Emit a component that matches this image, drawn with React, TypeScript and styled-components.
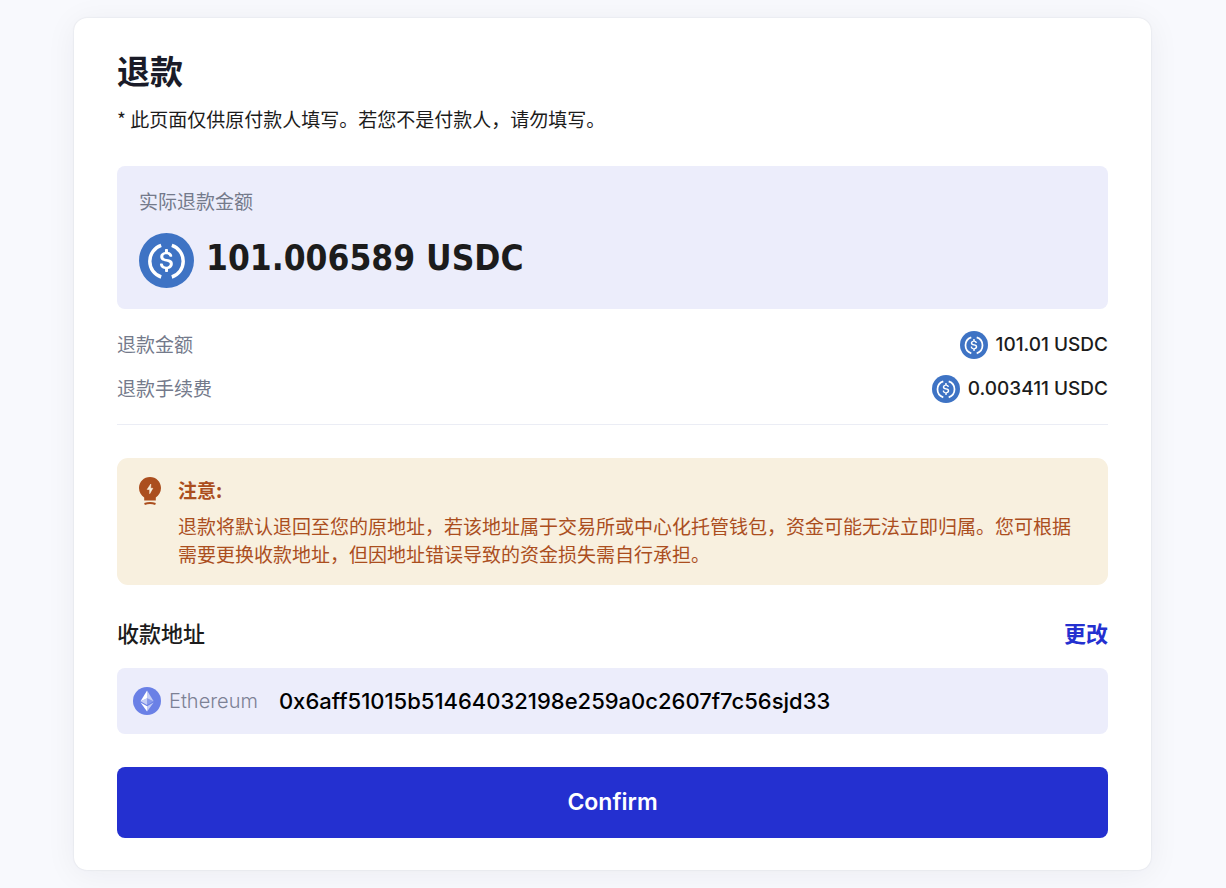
import React from 'react';
import styled, { createGlobalStyle } from 'styled-components';

const latin = `Inter, "Noto Sans CJK SC", sans-serif`;
const chinese = `"Noto Sans CJK SC", sans-serif`;

const GlobalStyle = createGlobalStyle`
  *, *::before, *::after { box-sizing: border-box; }
  body {
    margin: 0;
    background: #f8f9fd;
    color: #1c1c1c;
    font-family: ${chinese};
    font-size: 19px;
    line-height: 28px;
  }
  h1, h2, h3, p, dl, dd { margin: 0; }
  svg { display: block; flex: none; }
`;

const Page = styled.div`
  padding: 18px 75px 18px 74px;
`;

const Card = styled.main`
  padding: 30px 43px 32px;
  background: #fff;
  border-radius: 13px;
  box-shadow: 0 0 2px rgba(28, 30, 50, 0.12), 0 4px 32px rgba(28, 30, 50, 0.06);
`;

const Title = styled.h1`
  font-size: 33px;
  line-height: 44px;
  font-weight: 700;
  color: #1a1b28;
`;

const Hint = styled.p`
  margin-top: 13px;
`;

const Panel = styled.section`
  background: #ecedfb;
  border-radius: 8px;
`;

const TotalPanel = styled(Panel)`
  margin-top: 33px;
  padding: 21px 22px;
`;

const Label = styled.p`
  color: #747a8b;
`;

const Total = styled.p`
  display: flex;
  align-items: flex-start;
  gap: 12px;
  margin-top: 18px;
  font-family: "DejaVu Sans Condensed", "DejaVu Sans", sans-serif;
  font-size: 35px;
  line-height: 50px;
  font-weight: 700;
`;

const Breakdown = styled.dl`
  display: grid;
  gap: 16px;
  margin-top: 22px;
  padding-bottom: 21px;
  border-bottom: 1px solid #ebedf5;
`;

const BreakdownRow = styled.div`
  display: flex;
  justify-content: space-between;
  align-items: flex-start;

  dt {
    color: #747a8b;
    line-height: 26px;
  }
  dd {
    display: flex;
    align-items: center;
    gap: 8px;
    font-family: ${latin};
    font-weight: 500;
  }
`;

const Notice = styled.aside`
  display: flex;
  align-items: flex-start;
  gap: 17px;
  margin-top: 33px;
  padding: 19px 22px 17px;
  border-radius: 11px;
  background: #f8f0df;
  color: #ab4e1e;
`;

const NoticeTitle = styled.h2`
  margin-bottom: 9px;
  font-size: 19px;
  line-height: 26px;
  font-weight: 700;
`;

const SectionHead = styled.header`
  display: flex;
  justify-content: space-between;
  align-items: center;
  margin-top: 33px;
`;

const SectionTitle = styled.h2`
  font-size: 22px;
  line-height: 28px;
  font-weight: 500;
`;

const TextButton = styled.button`
  padding: 0;
  border: 0;
  background: none;
  color: #2430d0;
  font-family: ${chinese};
  font-size: 22px;
  line-height: 28px;
  font-weight: 700;
  cursor: pointer;
`;

const AddressPanel = styled(Panel)`
  display: flex;
  align-items: center;
  margin-top: 22px;
  padding: 19px 16px;
  font-family: ${latin};
`;

const Network = styled.span`
  margin: 0 21px 0 8px;
  color: #7c8195;
  font-size: 20px;
  font-weight: 300;
`;

const Address = styled.span`
  color: #000;
  font-size: 22px;
  font-weight: 500;
`;

const ConfirmButton = styled.button`
  width: 100%;
  margin-top: 33px;
  padding: 21px;
  border: 0;
  border-radius: 8px;
  background: #2430d0;
  color: #fff;
  font-family: ${latin};
  font-size: 23px;
  line-height: 29px;
  font-weight: 600;
  cursor: pointer;
`;

const UsdcIcon = ({ size }: { size: number }) => (
  <svg width={size} height={size} viewBox="0 0 32 32" aria-hidden="true">
    <circle cx="16" cy="16" r="16" fill="#3e73c4" />
    <path
      fill="#fff"
      transform="translate(1.28 1.31) scale(.92)"
      d="M20.022 18.124c0-2.124-1.28-2.852-3.84-3.156-1.828-.243-2.193-.728-2.193-1.578 0-.85.61-1.396 1.828-1.396 1.097 0 1.707.364 2.011 1.275a.458.458 0 00.427.303h.975a.416.416 0 00.427-.425v-.06a3.04 3.04 0 00-2.743-2.489V9.142c0-.243-.183-.425-.487-.486h-.915c-.243 0-.426.182-.487.486v1.396c-1.829.242-2.986 1.456-2.986 2.974 0 2.002 1.218 2.791 3.778 3.095 1.707.303 2.255.668 2.255 1.639 0 .97-.853 1.638-2.011 1.638-1.585 0-2.133-.667-2.316-1.578-.06-.242-.244-.364-.427-.364h-1.036a.416.416 0 00-.426.425v.06c.243 1.518 1.219 2.61 3.23 2.914v1.457c0 .242.183.425.487.485h.915c.243 0 .426-.182.487-.485V21.34c1.829-.303 3.047-1.578 3.047-3.217z"
    />
    <path
      fill="none"
      stroke="#fff"
      strokeWidth="2"
      d="M12.9 7.2A9.7 9.7 0 0 0 12.9 25.6M19.1 7.2A9.7 9.7 0 0 1 19.1 25.6"
    />
  </svg>
);

const EthereumIcon = () => (
  <svg width="28" height="28" viewBox="0 0 32 32" aria-hidden="true">
    <circle cx="16" cy="16" r="16" fill="#6a80e6" />
    <g fill="#fff" transform="translate(-.4 0)">
      <path fillOpacity=".602" d="M16.498 4v8.87l7.497 3.350z" />
      <path d="M16.498 4L9 16.220l7.498-3.350z" />
      <path fillOpacity=".602" d="M16.498 21.968v6.027L24 17.616z" />
      <path d="M16.498 27.995v-6.028L9 17.616z" />
      <path fillOpacity=".2" d="M16.498 20.573l7.497-4.353-7.497-3.348z" />
      <path fillOpacity=".602" d="M9 16.220l7.498 4.353v-7.701z" />
    </g>
  </svg>
);

const BulbIcon = () => (
  <svg width="22" height="28" viewBox="0 0 22 28" aria-hidden="true">
    <path
      fill="currentColor"
      d="M11 0C4.900 0 0 4.900 0 11c0 4.200 2.300 7.300 5.200 9.500V23.500h11.600v-3C19.700 18.300 22 15.200 22 11 22 4.900 17.100 0 11 0z"
    />
    <path fill="none" stroke="currentColor" strokeWidth="2" d="M5.500 27Q11 25 16.500 27" />
    <path
      fill="#f8f0df"
      stroke="#f8f0df"
      strokeWidth=".6"
      strokeLinejoin="round"
      d="M11.800 7L8.200 12.400h2.500v4.300l3.100-5.400h-2.200z"
    />
  </svg>
);

const amounts = [
  { label: '退款金额', value: '101.01 USDC' },
  { label: '退款手续费', value: '0.003411 USDC' },
];

export default function App() {
  return (
    <>
      <GlobalStyle />
      <Page>
        <Card>
          <Title>退款</Title>
          <Hint>* 此页面仅供原付款人填写。若您不是付款人，请勿填写。</Hint>

          <TotalPanel>
            <Label>实际退款金额</Label>
            <Total>
              <UsdcIcon size={55} />
              <span>101.006589 USDC</span>
            </Total>
          </TotalPanel>

          <Breakdown>
            {amounts.map(({ label, value }) => (
              <BreakdownRow key={label}>
                <dt>{label}</dt>
                <dd>
                  <UsdcIcon size={28} />
                  {value}
                </dd>
              </BreakdownRow>
            ))}
          </Breakdown>

          <Notice>
            <BulbIcon />
            <div>
              <NoticeTitle>注意:</NoticeTitle>
              <p>
                退款将默认退回至您的原地址，若该地址属于交易所或中心化托管钱包，资金可能无法立即归属。您可根据需要更换收款地址，但因地址错误导致的资金损失需自行承担。
              </p>
            </div>
          </Notice>

          <SectionHead>
            <SectionTitle>收款地址</SectionTitle>
            <TextButton type="button">更改</TextButton>
          </SectionHead>
          <AddressPanel>
            <EthereumIcon />
            <Network>Ethereum</Network>
            <Address>0x6aff51015b51464032198e259a0c2607f7c56sjd33</Address>
          </AddressPanel>

          <ConfirmButton type="button">Confirm</ConfirmButton>
        </Card>
      </Page>
    </>
  );
}
